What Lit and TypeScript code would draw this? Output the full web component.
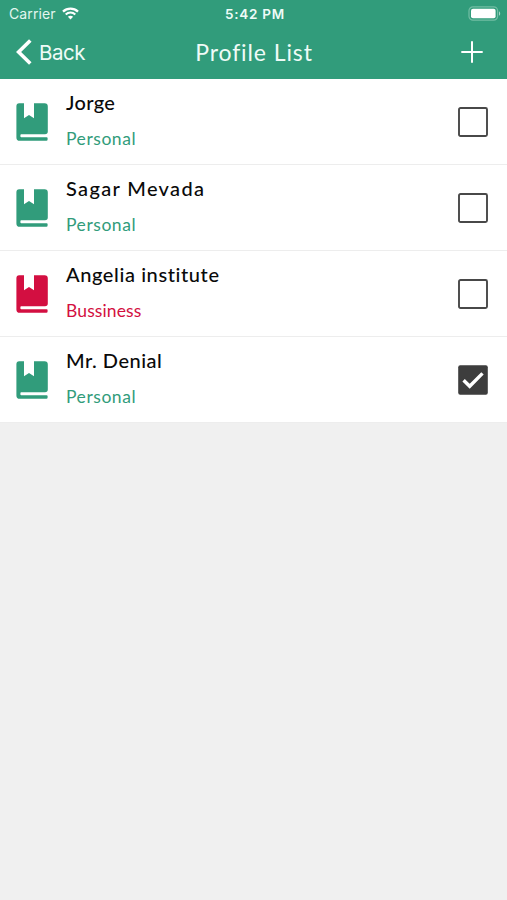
import { LitElement, html, css, svg } from "lit";
import { customElement, property } from "lit/decorators.js";
import { classMap } from "lit/directives/class-map.js";
import { styleMap } from "lit/directives/style-map.js";

interface Profile {
  name: string;
  kind: string;
  business: boolean;
  checked: boolean;
  nameSpacing: number;
  kindSpacing: number;
}

const PROFILES: Profile[] = [
  { name: "Jorge", kind: "Personal", business: false, checked: false, nameSpacing: 0.35, kindSpacing: 0.55 },
  { name: "Sagar Mevada", kind: "Personal", business: false, checked: false, nameSpacing: 1.35, kindSpacing: 0.55 },
  { name: "Angelia institute", kind: "Bussiness", business: true, checked: false, nameSpacing: 0.6, kindSpacing: 0.12 },
  { name: "Mr. Denial", kind: "Personal", business: false, checked: true, nameSpacing: 0.5, kindSpacing: 0.55 },
];

@customElement("status-bar")
export class StatusBar extends LitElement {
  static styles = css`
    :host {
      display: grid;
      grid-template-columns: 1fr auto 1fr;
      align-items: center;
      height: 27px;
      padding: 0 6px 0 9px;
      box-sizing: border-box;
      color: #fff;
      font-family: Inter, "Liberation Sans", sans-serif;
      font-size: 14px;
    }
    .carrier {
      display: flex;
      align-items: center;
      gap: 6px;
      letter-spacing: 0.1px;
      color: #e3f6ef;
    }
    .time {
      font-weight: 600;
      font-size: 13.5px;
      letter-spacing: 0.75px;
      color: #effbf7;
    }
    .battery {
      justify-self: end;
    }
    svg {
      display: block;
    }
  `;

  render() {
    return html`
      <div class="carrier">
        <span>Carrier</span>
        <svg width="17" height="13" viewBox="0 0 17 13">
          <path d="M1 4.6C5.2.6 11.8.6 16 4.6" fill="none" stroke="#fff" stroke-width="2.3" />
          <path d="M3.7 7.4C6.4 4.9 10.6 4.9 13.3 7.4" fill="none" stroke="#fff" stroke-width="2.1" />
          <path d="M5.9 9.7C7.4 8.3 9.6 8.3 11.1 9.7L8.5 12.4Z" fill="#fff" />
        </svg>
      </div>
      <span class="time">5:42 PM</span>
      <svg class="battery" width="33" height="15" viewBox="0 0 33 15">
        <rect x="1" y=".8" width="28.6" height="13.4" rx="4" fill="none" stroke="#72bda4" stroke-width="1.2" />
        <rect x="3" y="2.8" width="24.6" height="9.4" rx="2" fill="#fff" />
        <path d="M31 5.2C32.6 6 32.6 9 31 9.8Z" fill="#a6d8c7" />
      </svg>
    `;
  }
}

@customElement("nav-bar")
export class NavBar extends LitElement {
  static styles = css`
    :host {
      display: grid;
      grid-template-columns: 1fr auto 1fr;
      align-items: center;
      height: 50px;
      padding: 0 24px 0 16px;
      box-sizing: border-box;
      color: #effbf7;
    }
    .back {
      display: flex;
      align-items: center;
      gap: 7px;
      font: 400 20.5px Inter, "Liberation Sans", sans-serif;
      letter-spacing: -0.5px;
    }
    .title {
      font: 400 23px/30px Lato, sans-serif;
      letter-spacing: 0.9px;
      margin-left: 9px;
    }
    .add {
      justify-self: end;
    }
    svg {
      display: block;
    }
  `;

  render() {
    return html`
      <div class="back">
        <svg width="16" height="26" viewBox="0 0 16 26">
          <path d="M14.3 1.5L2.6 13L14.3 24.5" fill="none" stroke="#fff" stroke-width="3.6" />
        </svg>
        <span>Back</span>
      </div>
      <span class="title">Profile List</span>
      <svg class="add" width="22" height="22" viewBox="0 0 22 22">
        <path d="M11 .3V21.7M.3 11H21.7" fill="none" stroke="#fff" stroke-width="2" />
      </svg>
    `;
  }
}

@customElement("profile-row")
export class ProfileRow extends LitElement {
  @property({ attribute: false }) profile!: Profile;

  static styles = css`
    :host {
      display: flex;
      align-items: center;
      height: 86px;
      box-sizing: border-box;
      padding: 0 19px 0 16px;
      background: #fff;
      border-bottom: 1px solid #ededed;
      font-family: Lato, sans-serif;
    }
    .book {
      flex: none;
      fill: #319c7b;
    }
    .book.business {
      fill: #d30f41;
    }
    .labels {
      flex: 1;
      display: flex;
      flex-direction: column;
      gap: 7px;
      margin-left: 18px;
      margin-bottom: 2px;
      line-height: 30px;
      white-space: nowrap;
    }
    .name {
      font-size: 20px;
      font-weight: 500;
      color: #0a0a0a;
    }
    .kind {
      font-size: 17.5px;
      color: #319c7b;
    }
    .kind.business {
      color: #d30f41;
    }
    .check {
      flex: none;
    }
  `;

  render() {
    const p = this.profile;
    return html`
      <svg class=${classMap({ book: true, business: p.business })} width="32" height="38" viewBox="0 0 32 38">
        <path
          d="M3.2.3H8V15.2L13 12L18 15.2V.3H28.6Q31.8.3 31.8 3.4V28.6Q31.8 31.3 29 31.3H5.2Q4.4 31.3 4.4 32.2V33.3Q4.4 34.2 5.2 34.2H30.6Q31.6 34.2 31.6 35V36.6Q31.6 37.8 30.4 37.8H3.8Q.4 37.8 .4 34.4V3.3Q.4.3 3.2.3Z"
        />
      </svg>
      <div class="labels">
        <span class="name" style=${styleMap({ letterSpacing: `${p.nameSpacing}px` })}>${p.name}</span>
        <span
          class=${classMap({ kind: true, business: p.business })}
          style=${styleMap({ letterSpacing: `${p.kindSpacing}px` })}
          >${p.kind}</span
        >
      </div>
      <svg class="check" width="30" height="30" viewBox="0 0 30 30">
        ${p.checked
          ? svg`<rect x=".2" y=".2" width="29.6" height="29.6" rx="2" fill="#3d3d3d" />
              <path d="M5.6 15.2L11.7 21.3L24.5 8.4" fill="none" stroke="#fff" stroke-width="3.4" />`
          : svg`<rect x="1" y="1" width="28" height="28" rx="1.5" fill="#fff" stroke="#484848" stroke-width="1.9" />`}
      </svg>
    `;
  }
}

@customElement("app-root")
export class AppRoot extends LitElement {
  static styles = css`
    :host {
      display: block;
      height: 900px;
      background: #f0f0f0;
    }
    header {
      height: 79px;
      background: #319c7b;
    }
  `;

  render() {
    return html`
      <header>
        <status-bar></status-bar>
        <nav-bar></nav-bar>
      </header>
      <main>${PROFILES.map((p) => html`<profile-row .profile=${p}></profile-row>`)}</main>
    `;
  }
}
